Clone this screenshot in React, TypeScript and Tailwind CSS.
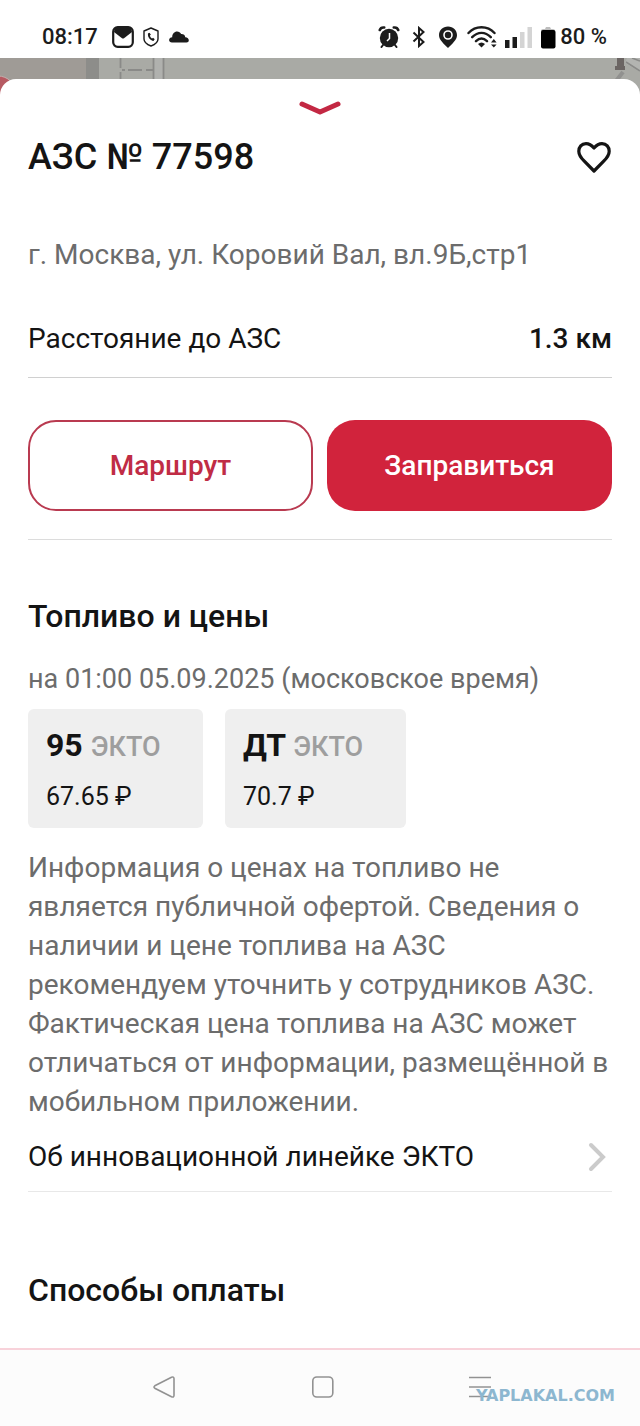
import { useState } from 'react';

interface Fuel {
    name: string;
    brand: string;
    price: string;
    box: string;
}

const fuels: Fuel[] = [
    { name: '95', brand: 'ЭКТО', price: '67.65 ₽', box: 'w-[175px]' },
    { name: 'ДТ', brand: 'ЭКТО', price: '70.7 ₽', box: 'w-[181px]' },
];

function StatusBar() {
    return (
        <header className="flex h-[58px] items-end justify-between bg-white pb-[7px] pl-[42px] pr-[33px] text-[22px] font-medium leading-7 text-[#1c1c1c]">
            <div className="flex items-center">
                <span>08:17</span>
                <svg className="ml-[14px]" width="22" height="22" viewBox="0 0 22 22">
                    <rect x="1.2" y="1.2" width="19.6" height="19.6" rx="4.5" fill="white" stroke="currentColor" strokeWidth="2.2" />
                    <path d="M3 1h16l1 5-8 6.200q-1 .7-2 0L2 6Z" fill="currentColor" />
                </svg>
                <svg className="ml-[9px]" width="16" height="20" viewBox="0 0 16 20" fill="none" stroke="currentColor" strokeWidth="1.4" strokeLinejoin="round">
                    <path d="M8 1 15 4v8c0 3-3 5.500-7 7-4-1.500-7-4-7-7V4Z" />
                    <path d="M6 6.500c-.8 3 1.500 6 4.500 6.500" strokeWidth="1.8" />
                    <path d="M5.600 6.300l1.400 2M9.300 11.500l1.700 1.600" strokeWidth="2.200" />
                </svg>
                <svg className="ml-[10px]" width="20" height="12" viewBox="0 0 20 12" fill="currentColor">
                    <path d="M3 11.500C1.200 11.500.1 10.400.1 9c0-1.700 1.400-2.800 3.100-2.800C3.200 2.800 5.500.5 8 .5c2 0 3.400 1 4.100 2.600 2.200-.2 3.900 1 4.200 3.200 2.200.1 3.500 1.500 3.500 3 0 1.400-1 2.200-2.300 2.200Z" />
                </svg>
            </div>
            <div className="flex items-center">
                <svg width="22" height="22" viewBox="0 0 22 22" fill="none" stroke="currentColor">
                    <circle cx="11" cy="12" r="9.200" fill="currentColor" stroke="none" />
                    <path d="M1.800 4C2.300 2.500 4 1.200 6.200 1.500M20.200 4C19.700 2.500 18 1.200 15.800 1.500" strokeWidth="2.600" strokeLinecap="round" />
                    <path d="M5 19l-1.500 2M17 19l1.500 2" strokeWidth="2" strokeLinecap="round" />
                    <path d="M11.500 7v5.500L9 15" stroke="white" strokeWidth="1.500" />
                </svg>
                <svg className="ml-3" width="14" height="22" viewBox="0 0 14 22" fill="none" stroke="currentColor" strokeWidth="2">
                    <path d="M1.500 6.500l10 9.500-4.500 4V2l4.500 4-10 9.500" />
                </svg>
                <svg className="ml-3" width="20" height="22" viewBox="0 0 20 22">
                    <path d="M10 .5c5.200 0 9 3.800 9 8.700 0 4.800-5 8.500-9 12.800C6 17.700 1 14 1 9.200 1 4.300 4.800.5 10 .5Z" fill="currentColor" />
                    <circle cx="10" cy="9" r="4" fill="none" stroke="white" strokeWidth="1.600" />
                </svg>
                <svg className="ml-[9px]" width="30" height="22" viewBox="0 0 30 22" fill="none" stroke="currentColor" strokeWidth="2.400" strokeLinecap="round">
                    <path d="M1.500 7C8.500-.7 20.500-.7 27.500 7M5.200 11.200c5.500-5.800 13.100-5.800 18.600 0M9 15.200c3.500-3.400 7.500-3.400 11 0" />
                    <path d="M11 18q3.500-3 7 0l-3.500 3.500Z" fill="currentColor" stroke="none" />
                    <path d="M24 16.500l2.800-3.500 2.800 3.500ZM24 18.500l2.800 3 2.800-3Z" fill="currentColor" stroke="none" />
                </svg>
                <svg className="ml-[7px]" width="28" height="22" viewBox="0 0 28 22">
                    <path d="M1 14h4.500v8H1ZM8.500 11H13v11H8.500Z" fill="currentColor" />
                    <path d="M16 6h4.500v16H16ZM23.500 1H28v21h-4.500Z" fill="#d4d4d4" />
                </svg>
                <svg className="ml-[8px]" width="16" height="23" viewBox="0 0 16 23">
                    <path d="M1 5q0-2 2-2h2l1-2h4l1 2h2q2 0 2 2Z" fill="#bdbdbd" />
                    <rect x="1" y="4" width="14.500" height="18.500" rx="2" fill="black" />
                </svg>
                <span className="ml-1">80 %</span>
            </div>
        </header>
    );
}

// Strip of the dimmed map that stays visible above the sheet
function MapStrip() {
    return (
        <div className="flex h-[37px] justify-between bg-[#a9aaa5]">
            <svg width="170" height="37" viewBox="0 0 170 37">
                <path d="M0 0h86v37H0Z" fill="#9f9b96" />
                <path d="M86 0h13v37H86Z" fill="#8d8d8a" />
                <circle cx="-2" cy="36" r="18" fill="#b65a62" stroke="#c4b0ae" />
                <path d="M154 0h9v37h-9Z" fill="#b0b1ae" />
                <path d="M120.500 0v10M120.500 14v23M122 12h3M128 12h14M146 12h7M153.500 0v37M163.500 0v37" fill="none" stroke="#8a8a88" strokeWidth="1.800" />
            </svg>
            <svg width="30" height="37" viewBox="0 0 30 37">
                <path d="M17 0h13v14L15 5Z" fill="#b3b4b1" />
                <path d="M16 4l14 9M22 0l8 3" stroke="#8a8a88" strokeWidth="1.500" />
                <path d="M13 14l-7 9" stroke="#91918f" strokeWidth="4" />
                <path d="M7 0h7v8h1v4H5V8h2Z" fill="#6b6563" />
            </svg>
        </div>
    );
}

function NavBar() {
    return (
        <nav className="relative flex h-[78px] items-start border-t-2 border-[#f8d2da] bg-[#fcfcfc] pl-[153px] pt-[26px] text-[#929292]">
            <button type="button" aria-label="Назад">
                <svg width="22" height="22" viewBox="0 0 22 22" fill="none" stroke="currentColor" strokeWidth="1.600">
                    <path d="M1.800 9.800 18.500 1.200q2.300-.8 2.500 1.300v17q-.2 2.200-2.500 1.300L1.800 12.200q-1.600-1.200 0-2.400Z" />
                </svg>
            </button>
            <button type="button" aria-label="Домой" className="ml-[136px]">
                <svg width="24" height="22" viewBox="0 0 24 22" fill="none" stroke="currentColor" strokeWidth="1.600">
                    <rect x="1.800" y="1" width="20" height="20" rx="4" />
                </svg>
            </button>
            <button type="button" aria-label="Меню" className="ml-[134px]">
                <svg width="22" height="22" viewBox="0 0 22 22" stroke="currentColor" strokeWidth="1.600">
                    <path d="M0 1.500h22M0 11h22M0 20.500h22" />
                </svg>
            </button>
            <span className="absolute bottom-5 right-[25px] font-['DejaVu_Sans',sans-serif] text-base font-bold leading-5 text-[#8db7d0]">
                YAPLAKAL.COM
            </span>
        </nav>
    );
}

export default function App() {
    const [liked, setLiked] = useState(false);

    return (
        <div className="flex min-h-screen flex-col bg-white font-[Roboto,sans-serif] text-[#141414]">
            <StatusBar />
            <MapStrip />
            <main className="relative -mt-4 flex-1 rounded-t-2xl bg-white px-7 pb-9">
                <button type="button" aria-label="Свернуть" className="mx-auto block pt-5">
                    <svg width="44" height="18" viewBox="0 0 44 18" fill="none" stroke="#c32843" strokeWidth="5" strokeLinecap="round" strokeLinejoin="round">
                        <path d="M4 5l18 8 18-8" />
                    </svg>
                </button>

                <div className="mt-4 flex items-center justify-between">
                    <h1 className="text-4xl font-medium leading-[48px]">АЗС № 77598</h1>
                    <button type="button" aria-label="В избранное" onClick={() => setLiked(!liked)}>
                        <svg width="36" height="34" viewBox="0 0 36 34" fill={liked ? '#d1233c' : 'none'} stroke="currentColor" strokeWidth="3.200" strokeLinejoin="round">
                            <path d="M18 8C15.500 5 13 3.600 10 3.600c-4.500 0-7.200 3.600-7.200 7.600 0 4 2.500 7 5.500 10L18 31l9.700-9.800c3-3 5.500-6 5.500-10 0-4-2.700-7.600-7.200-7.600-3 0-5.500 1.400-8 4.400Z" />
                        </svg>
                    </button>
                </div>

                <p className="mt-[54px] text-[28px] leading-10 text-[#6c6c6c]">г. Москва, ул. Коровий Вал, вл.9Б,стр1</p>

                <div className="mt-9 flex items-center justify-between border-b border-[#d0d0d0] pb-[22px] pt-3 text-[28px] leading-8">
                    <span>Расстояние до АЗС</span>
                    <span className="font-medium">1.3 км</span>
                </div>

                <div className="grid grid-cols-2 gap-[14px] border-b border-[#dcdcdc] pb-7 pt-[42px] text-[28px] font-medium">
                    <button type="button" className="h-[91px] rounded-[28px] border-2 border-[#b93a50] text-[#c02c45]">
                        Маршрут
                    </button>
                    <button type="button" className="h-[91px] rounded-[28px] bg-[#d1233c] text-white">
                        Заправиться
                    </button>
                </div>

                <section className="pt-14">
                    <h2 className="text-[32px] font-medium leading-10">Топливо и цены</h2>
                    <p className="mt-[23px] text-[27px] leading-10 text-[#6c6c6c]">на 01:00 05.09.2025 (московское время)</p>
                    <div className="mt-[10px] flex gap-[22px]">
                        {fuels.map((f) => (
                            <div key={f.name} className={`${f.box} h-[119px] rounded-md bg-[#efefef] px-[18px] pt-4`}>
                                <p className="text-[32px] font-bold leading-10">
                                    {f.name} <span className="text-[27px] font-medium text-[#9e9e9e]">{f.brand}</span>
                                </p>
                                <p className="mt-[14px] text-[25px] leading-8">{f.price}</p>
                            </div>
                        ))}
                    </div>
                    <p className="mt-5 text-[28px] leading-[39px] text-[#6c6c6c]">
                        Информация о ценах на топливо не является публичной офертой. Сведения о наличии и цене топлива на АЗС рекомендуем
                        уточнить у сотрудников АЗС. Фактическая цена топлива на АЗС может отличаться от информации, размещённой в
                        мобильном приложении.
                    </p>
                    <a href="#ecto" className="flex items-center justify-between border-b border-[#e8e8e8] pb-[14px] pt-4 text-[28px] leading-10">
                        Об инновационной линейке ЭКТО
                        <svg className="mr-1" width="20" height="32" viewBox="0 0 20 32" fill="none" stroke="#cbcbcb" strokeWidth="4" strokeLinecap="round">
                            <path d="M3 4l12 12L3 28" />
                        </svg>
                    </a>
                </section>

                <h2 className="mt-[78px] text-[32px] font-medium leading-10">Способы оплаты</h2>
            </main>
            <NavBar />
        </div>
    );
}
